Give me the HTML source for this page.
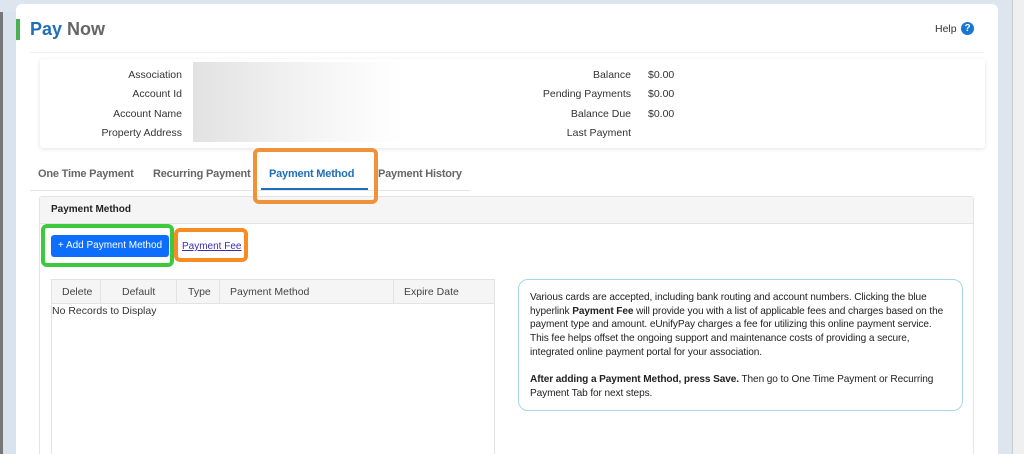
<!DOCTYPE html>
<html><head><style>
*{margin:0;padding:0;box-sizing:border-box}
html,body{width:1024px;height:454px;overflow:hidden}
body{background:#dde6ef;font-family:"Liberation Sans",sans-serif;position:relative;font-size:10.5px;color:#333}
.a{position:absolute}
.r{text-align:right}
</style></head><body>
<div class="a" style="left:0;top:12px;width:3px;height:442px;background:#777"></div>
<div class="a" style="left:3px;top:12px;width:13px;height:442px;background:#d8e3ee"></div>
<div class="a" style="left:1012px;top:0;width:12px;height:454px;background:#f0f0f0;border-left:1px solid #ccc"></div>
<div class="a" style="left:16px;top:4px;width:982px;height:450px;background:#fff;border-radius:6px 6px 0 0"></div>
<div class="a" style="left:16px;top:19px;width:4px;height:21px;background:#4cb050"></div>
<div class="a" style="left:30px;top:19px;font-size:18px;font-weight:bold;color:#1f6fb8">Pay <span style="color:#666">Now</span></div>
<div class="a" style="left:935px;top:23px;font-size:10.5px;color:#333">Help</div>
<div class="a" style="left:961px;top:22px;width:13px;height:13px;border-radius:50%;background:#1976d2;color:#fff;font-size:10px;font-weight:bold;text-align:center;line-height:13px">?</div>
<div class="a" style="left:30px;top:52px;width:954px;height:1px;background:#eee"></div>
<div class="a" style="left:40px;top:59px;width:945px;height:89px;background:#fff;box-shadow:0 1px 4px rgba(0,0,0,.12);border-radius:3px"></div>
<div class="a r" style="left:40px;top:66px;width:142px;line-height:19.3px">Association<br>Account Id<br>Account Name<br>Property Address</div>
<div class="a" style="left:193px;top:62px;width:212px;height:80px;background:linear-gradient(90deg,#e2e2e2,#efefef 40%,#f8f8f8 70%,#fff)"></div>
<div class="a r" style="left:440px;top:66px;width:191px;line-height:19.3px">Balance<br>Pending Payments<br>Balance Due<br>Last Payment</div>
<div class="a" style="left:648px;top:66px;line-height:19.3px">$0.00<br>$0.00<br>$0.00</div>
<div class="a" style="left:38px;top:168px;font-size:11px;font-weight:bold;color:#666;white-space:nowrap;letter-spacing:-0.2px">One Time Payment</div>
<div class="a" style="left:153px;top:168px;font-size:11px;font-weight:bold;color:#666;white-space:nowrap;letter-spacing:-0.2px">Recurring Payment</div>
<div class="a" style="left:269px;top:168px;font-size:11px;font-weight:bold;color:#1f6fb8;white-space:nowrap;letter-spacing:-0.2px">Payment Method</div>
<div class="a" style="left:378px;top:168px;font-size:11px;font-weight:bold;color:#666;white-space:nowrap;letter-spacing:-0.2px">Payment History</div>
<div class="a" style="left:30px;top:190px;width:440px;height:1px;background:#e5e5e5"></div>
<div class="a" style="left:261px;top:188px;width:107px;height:2px;background:#1f6fb8"></div>
<div class="a" style="left:39px;top:196px;width:935px;height:270px;border:1px solid #e3e3e3;border-radius:3px"></div>
<div class="a" style="left:40px;top:197px;width:933px;height:27px;background:#f5f5f5;border-bottom:1px solid #e3e3e3"></div>
<div class="a" style="left:51px;top:204px;font-weight:bold;font-size:10px;color:#222">Payment Method</div>
<div class="a" style="left:253px;top:148px;width:125px;height:56px;border:4px solid #f0923a;border-radius:6px"></div>
<div class="a" style="left:51px;top:235px;width:118px;height:22px;background:#0d6efd;border-radius:3px;color:#fff;font-size:10px;text-align:center;line-height:22px;white-space:nowrap">+ Add Payment Method</div>
<div class="a" style="left:41px;top:224px;width:133px;height:43px;border:4px solid #3dc93d;border-radius:6px"></div>
<div class="a" style="left:182px;top:241px;color:#3a2fb0;text-decoration:underline;font-size:10px">Payment Fee</div>
<div class="a" style="left:174px;top:228px;width:74px;height:34px;border:4px solid #f68c22;border-radius:6px"></div>
<div class="a" style="left:51px;top:279px;width:444px;height:190px;border:1px solid #e3e3e3"></div>
<div class="a" style="left:52px;top:280px;width:442px;height:24px;background:#f5f5f5;border-bottom:1px solid #e3e3e3"></div>
<div class="a" style="left:100px;top:280px;width:1px;height:24px;background:#e3e3e3"></div>
<div class="a" style="left:176px;top:280px;width:1px;height:24px;background:#e3e3e3"></div>
<div class="a" style="left:219px;top:280px;width:1px;height:24px;background:#e3e3e3"></div>
<div class="a" style="left:393px;top:280px;width:1px;height:24px;background:#e3e3e3"></div>
<div class="a" style="left:62px;top:286px;color:#444">Delete</div>
<div class="a" style="left:122px;top:286px;color:#444">Default</div>
<div class="a" style="left:188px;top:286px;color:#444">Type</div>
<div class="a" style="left:230px;top:286px;color:#444">Payment Method</div>
<div class="a" style="left:404px;top:286px;color:#444">Expire Date</div>
<div class="a" style="left:52px;top:305px;color:#333">No Records to Display</div>
<div class="a" style="left:518px;top:279px;width:445px;height:132px;border:1px solid #a9d5e8;border-radius:10px"></div>
<div class="a" style="left:530px;top:291px;width:416px;font-size:10.1px;line-height:13.7px;color:#222;letter-spacing:-0.1px">Various cards are accepted, including bank routing and account numbers. Clicking the blue hyperlink <b>Payment Fee</b> will provide you with a list of applicable fees and charges based on the payment type and amount. eUnifyPay charges a fee for utilizing this online payment service. This fee helps offset the ongoing support and maintenance costs of providing a secure, integrated online payment portal for your association.<br><br><b>After adding a Payment Method, press Save.</b> Then go to One Time Payment or Recurring Payment Tab for next steps.</div>
</body></html>
